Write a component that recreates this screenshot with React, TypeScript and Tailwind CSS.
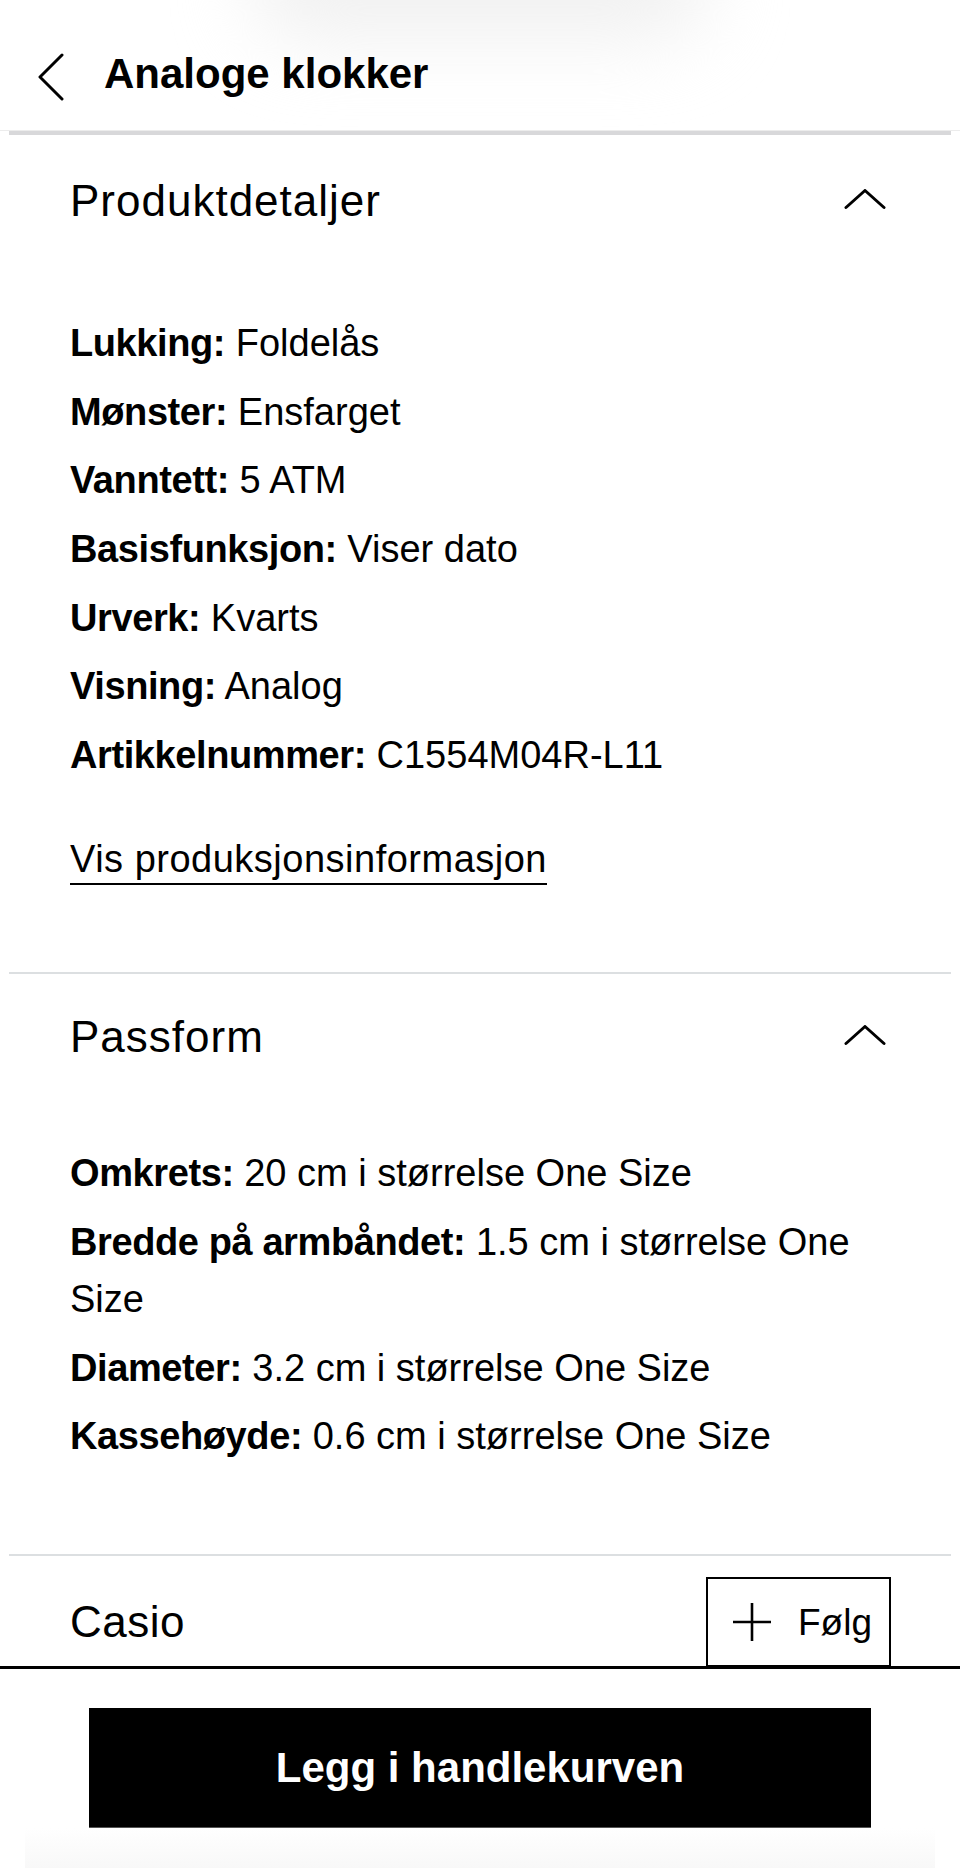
import React from "react";

function Row({ label, value }: { label: string; value: string }) {
  return (
    <div className="text-[38px] leading-[57px]">
      <span className="font-bold tracking-[-0.4px]">{label}</span> {value}
    </div>
  );
}

function ChevronUp() {
  return (
    <svg width="44" height="24" viewBox="0 0 44 24" className="mr-[3px] shrink-0" fill="none">
      <polyline points="3,18.5 22,1.5 41,18.5" stroke="black" strokeWidth="3" strokeLinecap="round" strokeLinejoin="round" />
    </svg>
  );
}

export default function App() {
  return (
    <div className="relative flex h-[1868px] w-[960px] flex-col overflow-hidden bg-white text-black font-['Liberation_Sans',Arial,sans-serif]">
      <div className="pointer-events-none absolute left-[250px] top-[-80px] h-[120px] w-[460px] rounded-full bg-[#f1f1f1] blur-[36px]" />
      <div className="relative flex-1 overflow-hidden">
        <header className="flex h-[130px] items-center pl-[38px] pt-[17px]">
          <svg width="26" height="48" viewBox="0 0 26 48" className="mt-[6px] shrink-0" fill="none">
            <polyline points="24,2 2,24 24,46" stroke="black" strokeWidth="3" strokeLinecap="round" strokeLinejoin="round" />
          </svg>
          <h1 className="ml-[40px] text-[42px] font-bold leading-none">Analoge klokker</h1>
        </header>
        <div className="h-[1px] bg-[#ececec]" />
        <div className="mx-[9px] h-[4px] bg-[#d8d8da]" />

        <section className="px-[70px] pb-[87px] pt-[26px]">
          <div className="flex h-[80px] items-center justify-between">
            <h2 className="text-[44px] leading-none tracking-[1px]">Produktdetaljer</h2>
            <ChevronUp />
          </div>
          <div className="mt-[74px] flex flex-col gap-[11.7px]">
            <Row label="Lukking:" value="Foldelås" />
            <Row label="Mønster:" value="Ensfarget" />
            <Row label="Vanntett:" value="5 ATM" />
            <Row label="Basisfunksjon:" value="Viser dato" />
            <Row label="Urverk:" value="Kvarts" />
            <Row label="Visning:" value="Analog" />
            <Row label="Artikkelnummer:" value="C1554M04R-L11" />
          </div>
          <div className="mt-[51px]">
            <span className="inline-block border-b-2 border-black text-[38px] leading-[48px] tracking-[0.5px]">
              Vis produksjonsinformasjon
            </span>
          </div>
        </section>

        <div className="mx-[9px] h-[2px] bg-[#dcdfe1]" />

        <section className="px-[70px] pb-[89px] pt-[23px]">
          <div className="flex h-[80px] items-center justify-between">
            <h2 className="text-[44px] leading-none tracking-[1px]">Passform</h2>
            <ChevronUp />
          </div>
          <div className="mt-[68px] flex flex-col gap-[11.7px]">
            <Row label="Omkrets:" value="20 cm i størrelse One Size" />
            <Row label="Bredde på armbåndet:" value="1.5 cm i størrelse One Size" />
            <Row label="Diameter:" value="3.2 cm i størrelse One Size" />
            <Row label="Kassehøyde:" value="0.6 cm i størrelse One Size" />
          </div>
        </section>

        <div className="mx-[9px] h-[2px] bg-[#dcdfe1]" />

        <section className="px-[70px] pt-[21px]">
          <div className="flex h-[90px] items-center justify-between">
            <h2 className="text-[44px] leading-none tracking-[0.5px]">Casio</h2>
            <button className="mr-[-1px] flex h-[90px] w-[185px] items-center border-2 border-black pl-[24px]">
              <svg width="40" height="40" viewBox="0 0 40 40" className="shrink-0" fill="none">
                <line x1="1" y1="20" x2="39" y2="20" stroke="black" strokeWidth="2.6" />
                <line x1="20" y1="1" x2="20" y2="39" stroke="black" strokeWidth="2.6" />
              </svg>
              <span className="ml-[26px] text-[37px] leading-none">Følg</span>
            </button>
          </div>
        </section>
      </div>

      <footer className="relative border-t-[3px] border-black bg-white pt-[39px]">
        <div className="mx-[89px] flex h-[120px] items-center justify-center border-b border-[#555] bg-black">
          <span className="text-[42px] font-bold leading-none text-white">Legg i handlekurven</span>
        </div>
        <div className="mx-[25px] h-[40px] bg-linear-to-b from-white to-[#f8f8f8]" />
      </footer>
    </div>
  );
}
